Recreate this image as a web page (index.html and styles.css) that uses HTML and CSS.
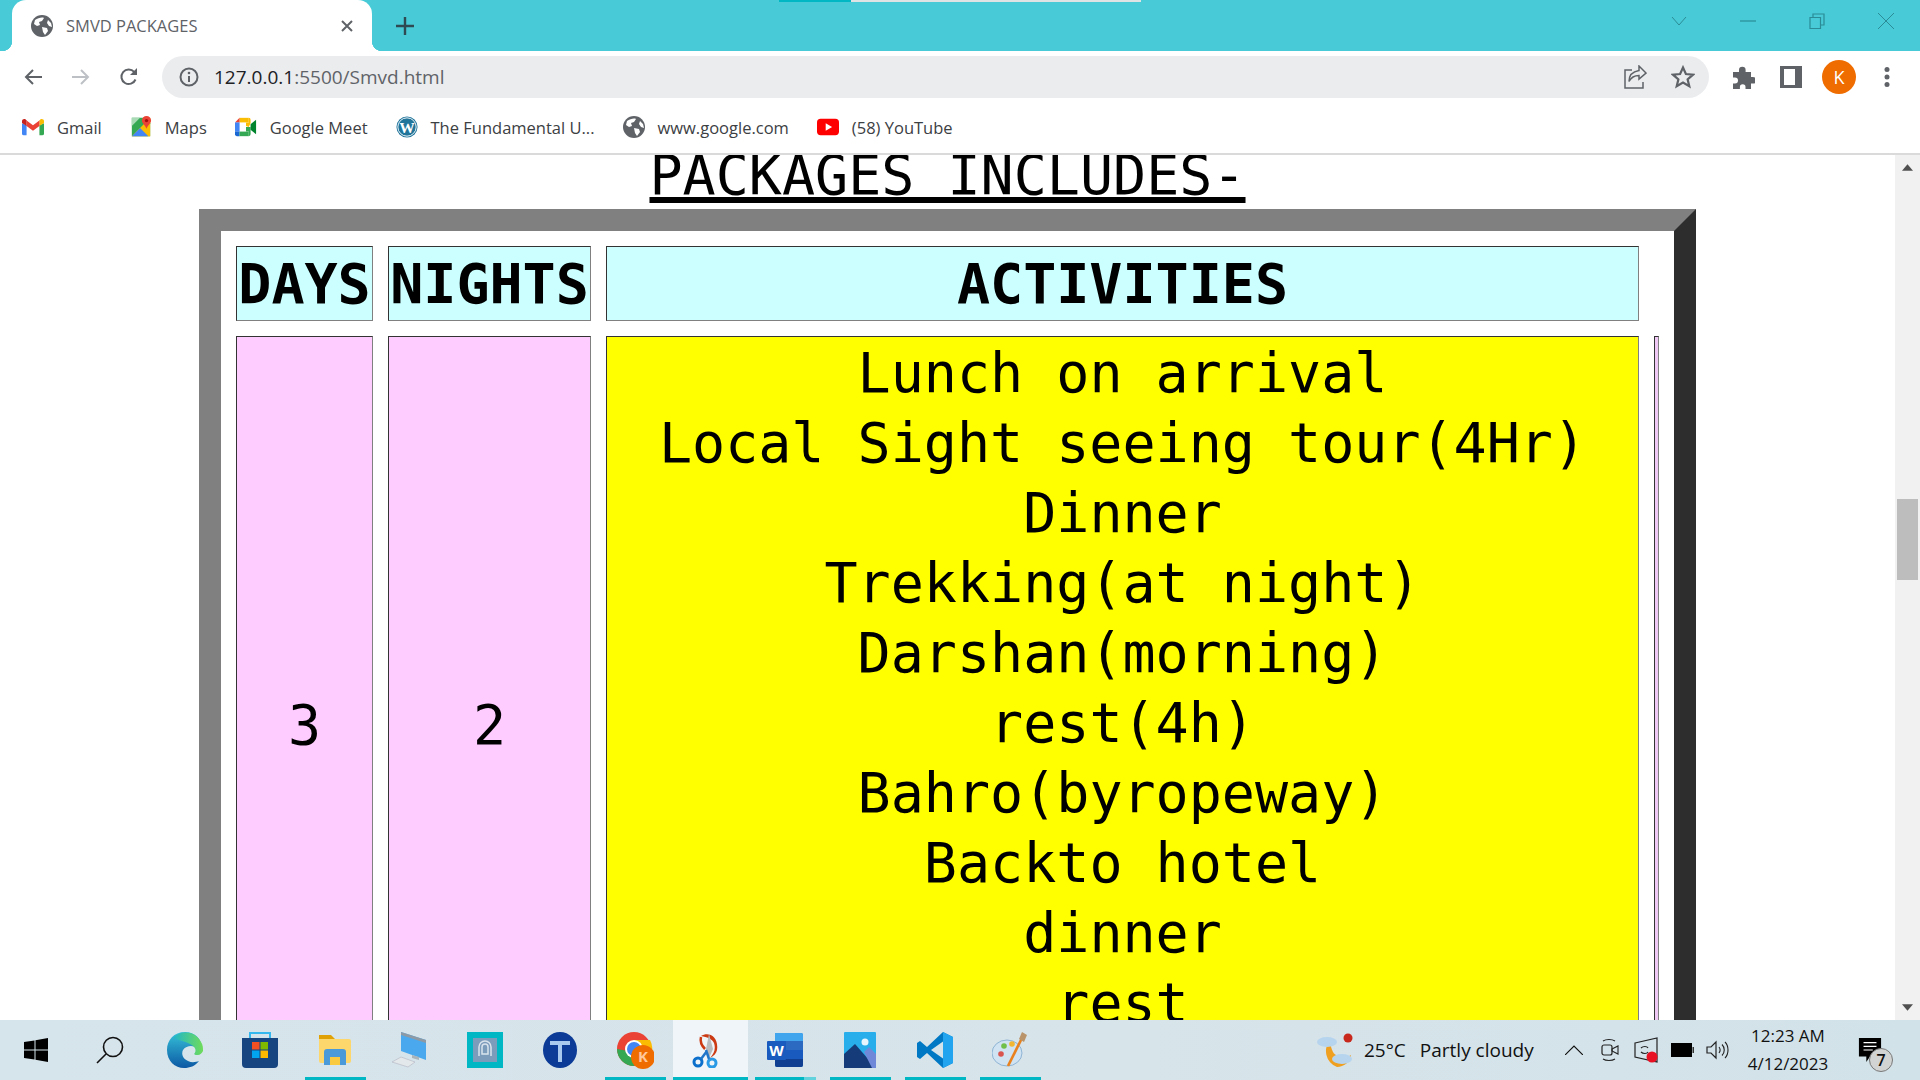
FILE: index.html
```html
<!DOCTYPE html>
<html lang="en">
<head>
<meta charset="utf-8">
<title>SMVD PACKAGES</title>
<link rel="stylesheet" href="styles.css">
</head>
<body>
<div class="window">
  <header class="titlebar">
    <div class="loadstrip"><span class="load-a"></span><span class="load-b"></span></div>
    <div class="tab">
      <svg class="favicon" viewBox="0 0 22 22"><use href="#globe"/></svg>
      <span class="tab-title">SMVD PACKAGES</span>
      <svg class="tab-close" viewBox="0 0 12 12"><path d="M1 1l10 10M11 1L1 11" stroke="#5f6368" stroke-width="2"/></svg>
    </div>
    <svg class="newtab" viewBox="0 0 18 18"><path d="M9 0v18M0 9h18" stroke="#2f4a52" stroke-width="2.4"/></svg>
    <div class="winctrls">
      <div class="winctrl"><svg viewBox="0 0 16 10" class="wc-svg"><path d="M1 1l7 8 7-8" fill="none" stroke="#2b8c97" stroke-width="1"/></svg></div>
      <div class="winctrl"><svg viewBox="0 0 16 16" class="wc-svg"><path d="M0 8h16" stroke="#2b8c97" stroke-width="1.2"/></svg></div>
      <div class="winctrl"><svg viewBox="0 0 16 16" class="wc-svg"><path d="M1 4.500h10.500v11H1zM4 4.500V1h11v11h-3.500" fill="none" stroke="#2b8c97" stroke-width="1.2"/></svg></div>
      <div class="winctrl"><svg viewBox="0 0 16 16" class="wc-svg"><path d="M0 0l16 16M16 0L0 16" stroke="#2b8c97" stroke-width="1"/></svg></div>
    </div>
  </header>

  <div class="toolbar">
    <div class="tbtn"><svg class="i20" viewBox="0 0 20 20"><path d="M19 10H3M10 3l-7 7 7 7" fill="none" stroke="#5f6368" stroke-width="2"/></svg></div>
    <div class="tbtn"><svg class="i20" viewBox="0 0 20 20"><path d="M1 10h16M10 3l7 7-7 7" fill="none" stroke="#bdc1c6" stroke-width="2"/></svg></div>
    <div class="tbtn"><svg class="i20" viewBox="0 0 20 20"><path d="M16.500 12.500a7.300 7.300 0 1 1-1.300-7.600" fill="none" stroke="#5f6368" stroke-width="2"/><path d="M18 1v7h-7z" fill="#5f6368"/></svg></div>
    <div class="omnibox">
      <svg class="i20 info" viewBox="0 0 20 20"><circle cx="10" cy="10" r="8.500" fill="none" stroke="#5f6368" stroke-width="2"/><path d="M10 9v6" stroke="#5f6368" stroke-width="2"/><circle cx="10" cy="6" r="1.300" fill="#5f6368"/></svg>
      <span class="url"><span class="url-host">127.0.0.1</span>:5500/Smvd.html</span>
      <div class="tbtn omni-btn"><svg class="i24" viewBox="0 0 24 24"><path d="M9 5H2v18h18v-6" fill="none" stroke="#5f6368" stroke-width="1.500"/><path d="M16 1l7 7-7 6v-3.500c-5 0-8 2-10 6 0-6 4-10 10-11z" fill="none" stroke="#5f6368" stroke-width="1.500"/></svg></div>
      <div class="tbtn omni-btn"><svg class="i24" viewBox="0 0 24 24"><path d="M12 2.500l2.900 6.500 7.100.7-5.400 4.600 1.700 7-6.300-3.700-6.300 3.700 1.700-7L2 9.700l7.100-.7z" fill="none" stroke="#5f6368" stroke-width="2.200"/></svg></div>
    </div>
    <div class="tbtn"><svg class="i24" viewBox="0 0 24 24"><path d="M2 7h6V5a3.300 3.300 0 0 1 6.600 0v2H20v5h2a3.300 3.300 0 0 1 0 6.600h-2V24h-5.500v-2a2.800 2.800 0 0 0-5.600 0v2H2v-5.500h2a3 3 0 0 0 0-6H2z" fill="#5f6368"/></svg></div>
    <div class="tbtn"><svg class="i22" viewBox="0 0 22 22"><path d="M0 0h22v22H0zM4 3v16h11V3z" fill="#5f6368" fill-rule="evenodd"/></svg></div>
    <div class="tbtn"><div class="avatar">K</div></div>
    <div class="tbtn"><svg class="i24" viewBox="0 0 24 24"><circle cx="12" cy="4.500" r="2.500" fill="#5f6368"/><circle cx="12" cy="12" r="2.500" fill="#5f6368"/><circle cx="12" cy="19.500" r="2.500" fill="#5f6368"/></svg></div>
  </div>

  <nav class="bookmarks">
    <div class="bm bm-gmail">
      <svg class="bm-icon" viewBox="0 0 24 18"><path d="M0 5v11a2 2 0 0 0 2 2h3V7z" fill="#4285f4"/><path d="M24 5v11a2 2 0 0 1-2 2h-3V7z" fill="#34a853"/><path d="M19 2v6l5-3.500V2.500C24 .5 21.500-.5 20 .7z" fill="#fbbc04"/><path d="M5 8V1.800L12 7l7-5.200V8l-7 5.200z" fill="#ea4335"/><path d="M0 2.500v2L5 8V1.800L4 .7C2.500-.5 0 .5 0 2.500z" fill="#c5221f"/></svg>
      <span>Gmail</span>
    </div>
    <div class="bm bm-maps">
      <svg class="bm-icon" viewBox="0 0 24 24"><path d="M2 2h14l6 6v14H2z" fill="#34a853"/><path d="M2 22L22 2v20z" fill="#fbbc04"/><path d="M2 22l9-9 9 9z" fill="#4285f4"/><path d="M2 2h9L2 11z" fill="#a8dab5"/><path d="M18 0a5 5 0 0 1 5 5c0 3-3.500 5-5 9-1.500-4-5-6-5-9a5 5 0 0 1 5-5z" fill="#ea4335"/><circle cx="18" cy="5" r="1.800" fill="#a50e0e"/></svg>
      <span>Maps</span>
    </div>
    <div class="bm bm-meet">
      <svg class="bm-icon" viewBox="0 0 24 20"><path d="M5 0h10v5H5z" fill="#fbbc04"/><path d="M0 5l5-5v5z" fill="#ea4335"/><path d="M0 5h5v10H0z" fill="#4285f4"/><path d="M0 15h5v5H2a2 2 0 0 1-2-2z" fill="#1967d2"/><path d="M5 15h10v5H5z" fill="#34a853"/><path d="M15 0a2 2 0 0 1 2 2v4l-2 4-3-1V5h3z" fill="#fbbc04"/><path d="M12 10h5v8a2 2 0 0 1-2 2v-5h-3z" fill="#34a853"/><path d="M17 7l6-5v16l-6-5z" fill="#00832d"/></svg>
      <span>Google Meet</span>
    </div>
    <div class="bm bm-wp">
      <svg class="bm-icon" viewBox="0 0 24 24"><circle cx="12" cy="12" r="11.500" fill="#21759b"/><circle cx="12" cy="12" r="10" fill="none" stroke="#fff" stroke-width="1"/><text x="12" y="18" class="wp-w">W</text></svg>
      <span>The Fundamental U...</span>
    </div>
    <div class="bm bm-google">
      <svg class="bm-icon" viewBox="0 0 22 22"><use href="#globe"/></svg>
      <span>www.google.com</span>
    </div>
    <div class="bm bm-yt">
      <svg class="bm-icon" viewBox="0 0 24 18"><rect width="24" height="18" rx="4" fill="#f00"/><path d="M9.500 5v8l7-4z" fill="#fff"/></svg>
      <span>(58) YouTube</span>
    </div>
  </nav>

  <div class="viewport">
    <main class="page">
      <h2 class="pk-head">PACKAGES INCLUDES-</h2>
      <table class="pk-table">
        <colgroup><col class="col-days"><col class="col-nights"><col class="col-act"><col class="col-thin"></colgroup>
        <tr class="row-head">
          <th>DAYS</th>
          <th>NIGHTS</th>
          <th>ACTIVITIES</th>
        </tr>
        <tr class="row-body">
          <td class="pink">3</td>
          <td class="pink">2</td>
          <td class="act">Lunch on arrival<br>Local Sight seeing tour(4Hr)<br>Dinner<br>Trekking(at night)<br>Darshan(morning)<br>rest(4h)<br>Bahro(byropeway)<br>Backto hotel<br>dinner<br>rest</td>
          <td class="thin"></td>
        </tr>
      </table>
    </main>
    <div class="scrollbar">
      <div class="sb-arrow"><svg class="sb-svg" viewBox="0 0 12 7"><path d="M6 0l6 7H0z" fill="#505050"/></svg></div>
      <div class="sb-track"><div class="sb-thumb"></div></div>
      <div class="sb-arrow"><svg class="sb-svg" viewBox="0 0 12 7"><path d="M6 7l6-7H0z" fill="#505050"/></svg></div>
    </div>
  </div>

  <footer class="taskbar">
    <div class="tile tile-start"><svg class="i24b" viewBox="0 0 24 24"><path d="M0 4l10.500-1.600v9H0zM11.500 2.200L24 0v11.400H11.500zM0 12.500h10.500v9.100L0 20zM11.500 12.500H24V24l-12.500-2.200z" fill="#000"/></svg></div>
    <div class="tile"><svg class="i28" viewBox="0 0 28 28"><circle cx="17" cy="11" r="9.500" fill="none" stroke="#111" stroke-width="1.600"/><path d="M10 18L1 27" stroke="#111" stroke-width="1.600"/></svg></div>
    <div class="tile"><svg class="i36" viewBox="0 0 36 36"><defs><linearGradient id="eb" x1="0" y1="0" x2="0" y2="1"><stop offset="0" stop-color="#35c1d9"/><stop offset="1" stop-color="#0c59a4"/></linearGradient><linearGradient id="eg" x1="0" y1="0" x2="1" y2="0"><stop offset="0" stop-color="#1fb5c9"/><stop offset="1" stop-color="#6fdc5a"/></linearGradient></defs><path d="M18 0C7 0 0 8 0 18c0 11 8 18 17 18 6 0 11-2 15-7-3 1-7 2-11 0-5-2-7-7-5-11 2-3 5-4 8-4 5 0 8 3 11 5V17C35 7 28 0 18 0z" fill="url(#eb)"/><path d="M6 6c7-8 22-8 28 4 2 3 2 6 2 9-1 2-3 4-5 4s-3 0-4-1c2-2 2-5 0-7-4-5-14-6-21-9z" fill="url(#eg)"/></svg></div>
    <div class="tile"><svg class="i36" viewBox="0 0 36 36"><path d="M8 6V1h20v5" fill="none" stroke="#35b8ee" stroke-width="2"/><path d="M0 6h36v26a4 4 0 0 1-4 4H4a4 4 0 0 1-4-4z" fill="#16457f"/><path d="M10 10h7.500v7.500H10z" fill="#f25022"/><path d="M18.500 10H26v7.500h-7.500z" fill="#7fba00"/><path d="M10 18.500h7.500V26H10z" fill="#00a4ef"/><path d="M18.500 18.500H26V26h-7.500z" fill="#ffb900"/></svg></div>
    <div class="tile tile-open"><svg class="i36" viewBox="0 0 36 36"><path d="M2 3h12l4 4H2z" fill="#e0a106"/><path d="M2 7h30a2 2 0 0 1 2 2v20a2 2 0 0 1-2 2H4a2 2 0 0 1-2-2z" fill="#fdd76c"/><path d="M7 33V20a3 3 0 0 1 3-3h16a3 3 0 0 1 3 3v13h-6v-8H13v8z" fill="#4a9ada"/><path d="M13 25h10v8H13z" fill="#f9c93f"/></svg></div>
    <div class="tile"><svg class="i36" viewBox="0 0 36 36"><path d="M9 0l25 8v20L9 19z" fill="#4aa9ee"/><path d="M9 0l25 8v3L9 3z" fill="#8d9aa5"/><path d="M20 23l7 2v3l-7-2z" fill="#a9b4bb"/><path d="M0 30l9-5 14 5-7 5z" fill="#e3e8ea" stroke="#aab" stroke-width=".5"/></svg></div>
    <div class="tile"><svg class="i36" viewBox="0 0 36 36"><rect width="36" height="36" fill="#00b7c3"/><rect x="6" y="6" width="24" height="24" fill="#7c9cbc"/><path d="M12 24v-9a6 6 0 0 1 12 0v9" fill="none" stroke="#d8e3ec" stroke-width="1.500"/><path d="M15 22v-7a3 3 0 0 1 6 0v7z" fill="none" stroke="#d8e3ec" stroke-width="1.500"/></svg></div>
    <div class="tile"><svg class="i36" viewBox="0 0 36 36"><ellipse cx="18" cy="18" rx="17" ry="18" fill="#0b3b96"/><path d="M8 9h20v4h-8v17h-4V13H8z" fill="#a9c8ee"/></svg></div>
    <div class="tile tile-open"><svg class="i38" viewBox="0 0 38 38"><circle cx="18" cy="18" r="17" fill="#ea4335"/><path d="M1 18a17 17 0 0 0 17 17l8-14H18z" fill="#34a853"/><path d="M18 9h16a17 17 0 0 1-8 24z" fill="#fbbc04"/><circle cx="18" cy="18" r="9" fill="#fff"/><circle cx="18" cy="18" r="7" fill="#4285f4"/><circle cx="27" cy="26" r="12" fill="#ef6c00"/><text x="27" y="31" class="badge-k">K</text></svg></div>
    <div class="tile tile-open tile-current"><svg class="i36" viewBox="0 0 36 36"><path d="M9 4c8-5 18 1 16 14-.6 3-3 6-7 8 4-4 6-9 4-15-2-4-7-6-13-7z" fill="#cc3a14"/><path d="M9 5c-1 4 0 8 4 12" fill="none" stroke="#cc3a14" stroke-width="2.500"/><path d="M17 2l4 15-4 9-3-9z" fill="#b9bcbe"/><circle cx="6" cy="30" r="4" fill="none" stroke="#0b6fcb" stroke-width="3"/><circle cx="20" cy="31" r="4" fill="none" stroke="#2a9ae6" stroke-width="3"/><path d="M9 27l6-8M17 27l-3-9" stroke="#2276c9" stroke-width="2.500"/></svg></div>
    <div class="tile tile-open tile-partial"><svg class="i36" viewBox="0 0 36 36"><rect x="8" y="1" width="28" height="34" rx="2" fill="#2b7cd3"/><path d="M8 9h28v9H8z" fill="#2b6ac0"/><path d="M8 18h28v9H8z" fill="#185abd"/><path d="M8 27h28v6a2 2 0 0 1-2 2H10a2 2 0 0 1-2-2z" fill="#103f91"/><path d="M8 1h26a2 2 0 0 1 2 2v6H8z" fill="#41a5ee"/><rect y="9" width="19" height="19" rx="1" fill="#185abd"/><text x="9.500" y="24" class="word-w">W</text></svg></div>
    <div class="tile tile-open"><svg class="i36" viewBox="0 0 32 36"><rect width="32" height="36" rx="1" fill="#28aeea"/><circle cx="21" cy="10" r="3.500" fill="#e8f5fc"/><path d="M0 36V22l11-10 21 24z" fill="#153c78"/><path d="M20 20l5-5 7 7v14h-4z" fill="#6f89d8"/></svg></div>
    <div class="tile tile-open"><svg class="i36" viewBox="0 0 36 36"><path d="M26 0l10 5v26l-10 5L10 21 3 27l-3-2v-14l3-2 7 6z" fill="#0078c4"/><path d="M26 0l10 5v26l-10 5z" fill="#23a4ee"/><path d="M26 9.500L14 18l12 8.500z" fill="#d5e3ea"/></svg></div>
    <div class="tile tile-open"><svg class="i36" viewBox="0 0 36 36"><ellipse cx="15" cy="21" rx="15" ry="13" fill="#cfe3f2" stroke="#8fb4d4"/><circle cx="9" cy="22" r="2.800" fill="#d9534f"/><circle cx="12" cy="14" r="2.800" fill="#6fbf4a"/><circle cx="20" cy="12" r="2.800" fill="#f2b632"/><path d="M30 6L16 34" stroke="#e9821e" stroke-width="2.600"/><path d="M27 7l3-7 5 3-3 7z" fill="#b9946a"/></svg></div>
    <div class="tray">
      <div class="weather">
        <svg class="i36w" viewBox="0 0 36 34"><path d="M14 6a17 17 0 0 0 6 28c7 0 13-5 14-12-6 4-15 2-18-3-2-4-3-9-2-13z" fill="#f0a020"/><circle cx="31" cy="5" r="4.500" fill="#c8281c"/><ellipse cx="10" cy="9" rx="10" ry="5" fill="#b6d4ee"/><ellipse cx="25" cy="26" rx="10" ry="5" fill="#b6d4ee"/></svg>
        <span class="temp">25°C</span>
        <span class="cond">Partly cloudy</span>
      </div>
      <div class="tray-ic"><svg class="i18" viewBox="0 0 18 10"><path d="M0 10l9-9 9 9" fill="none" stroke="#111" stroke-width="1.200"/></svg></div>
      <div class="tray-ic"><svg class="i18t" viewBox="0 0 18 24"><rect x="1" y="7" width="10" height="10" rx="2" fill="none" stroke="#222" stroke-width="1.200"/><path d="M11 11l6-3v8l-6-3zM2 3c3-2 9-2 12 0M2 21c3 2 9 2 12 0" fill="none" stroke="#222" stroke-width="1.100"/></svg></div>
      <div class="tray-ic"><svg class="i24t" viewBox="0 0 24 26"><path d="M1 6l22-5v24L1 20z" fill="none" stroke="#222" stroke-width="1.200"/><path d="M7 11c2-2 6-2 7 0M7 15c2 2 6 2 7 0" fill="none" stroke="#222" stroke-width="1.200"/><circle cx="18" cy="20" r="5.500" fill="#e81123"/></svg></div>
      <div class="tray-ic"><svg class="i22b" viewBox="0 0 23 14"><path d="M0 0h21v14H0z" fill="#000"/><path d="M21.500 4H23v6h-1.500z" fill="#333"/></svg></div>
      <div class="tray-ic"><svg class="i24" viewBox="0 0 24 20"><path d="M1 7h4l5-5v16l-5-5H1z" fill="none" stroke="#222" stroke-width="1.200"/><path d="M13 7c1.500 2 1.500 4 0 6M16 4.500c3 3 3 8 0 11M19 2c4 4 4 12 0 16" fill="none" stroke="#222" stroke-width="1.100"/></svg></div>
      <div class="clock"><span>12:23 AM</span><span>4/12/2023</span></div>
      <div class="notif">
        <svg class="i24" viewBox="0 0 24 26"><path d="M0 0h24v20H12l-4 6v-6H0z" fill="#000"/><path d="M5 5h14M5 9h14M5 13h10" stroke="#fff" stroke-width="1.300"/></svg>
        <span class="notif-count">7</span>
      </div>
    </div>
  </footer>
</div>
<svg class="defs" aria-hidden="true"><symbol id="globe" viewBox="0 0 22 22"><circle cx="11" cy="11" r="11" fill="#5f6368"/><path d="M4 5c3-2 7-3 9-2l-2 3-3 1 1 3-3 1-3-2zM11 12l5 1 1 3-3 4-2-3zM17 5l3 3 1 4-3-1-2-3z" fill="#fff"/></symbol></svg>
</body>
</html>
```

FILE: styles.css
```css
* { box-sizing: border-box; }
html, body { margin: 0; height: 100%; overflow: hidden; }
body { font-family: "Open Sans", "Noto Sans", sans-serif; background: #fff; }
svg { display: block; flex: none; }
.defs { width: 0; height: 0; position: absolute; }

.window { display: flex; flex-direction: column; height: 100vh; }

/* title bar */
.titlebar { position: relative; height: 51px; flex: none; background: #48cbd6; display: flex; align-items: center; padding-left: 12px; }
.loadstrip { position: absolute; top: 0; left: 779px; display: flex; height: 2px; }
.load-a { width: 72px; background: #00b7c3; }
.load-b { width: 290px; background: #dfe3e3; }
.tab { position: relative; width: 360px; height: 51px; background: #fff; border-radius: 14px 14px 0 0; display: flex; align-items: center; padding-left: 19px; color: #5f6368; }
.tab::before, .tab::after { content: ""; position: absolute; bottom: 0; width: 10px; height: 10px; }
.tab::before { left: -10px; background: radial-gradient(circle at 0 0, transparent 10px, #fff 10.500px); }
.tab::after { right: -10px; background: radial-gradient(circle at 100% 0, transparent 10px, #fff 10.500px); }
.favicon { width: 22px; height: 22px; }
.tab-title { margin-left: 13px; font-size: 16.500px; flex: 1; }
.tab-close { width: 12px; height: 12px; margin-right: 19px; }
.newtab { width: 18px; height: 18px; margin-left: 24px; }
.winctrls { display: flex; margin-left: auto; }
.winctrl { width: 69px; height: 51px; display: flex; align-items: center; justify-content: center; padding-bottom: 9px; }
.wc-svg { width: 16px; height: 16px; }

/* toolbar */
.toolbar { height: 52px; flex: none; display: flex; align-items: center; padding: 0 9px; background: #fff; }
.tbtn { width: 48px; height: 42px; flex: none; display: flex; align-items: center; justify-content: center; }
.i20 { width: 20px; height: 20px; }
.i22 { width: 22px; height: 22px; }
.i24 { width: 24px; height: 24px; }
.omnibox { flex: 1; height: 42px; margin: 0 10px 0 9px; background: #ebecee; border-radius: 21px; display: flex; align-items: center; padding: 0 2px 0 17px; }
.url { margin-left: 15px; flex: 1; font-size: 19px; color: #5f6368; }
.url-host { color: #202124; }
.avatar { width: 34px; height: 34px; border-radius: 50%; background: #ef6c00; color: #fff; font-size: 18px; display: flex; align-items: center; justify-content: center; }

/* bookmarks */
.bookmarks { height: 52px; flex: none; display: flex; align-items: center; padding: 0 0 2px 22px; border-bottom: 2px solid #dadada; font-size: 16.500px; color: #3c4043; }
.bm { display: flex; align-items: center; }
.bm-icon { width: 22px; height: 22px; margin-right: 13px; }
.bm-maps, .bm-meet, .bm-wp, .bm-google, .bm-yt { margin-left: 28px; }
.wp-w { font-family: "Liberation Serif", serif; font-size: 17px; font-weight: 700; fill: #fff; text-anchor: middle; }

/* page */
.viewport { flex: 1; min-height: 0; display: flex; overflow: hidden; background: #fff; }
.page { flex: 1; min-width: 0; color: #000; font-family: "DejaVu Sans Mono", monospace; font-size: 55px; }
.pk-head { margin: -7px 0 7px; font-size: 55px; font-weight: 400; line-height: 54px; text-align: center; text-decoration: underline; text-decoration-thickness: 6px; text-underline-offset: 3px; }
.pk-table { margin: 0 auto; width: 1497px; table-layout: fixed; border-collapse: separate; border-spacing: 15px; border: 22px solid; border-color: #808080 #2d2d2d #2d2d2d #808080; }
.col-days { width: 137px; }
.col-nights { width: 203px; }
.col-act { width: 1033px; }
.col-thin { width: 5px; }
.pk-table th, .pk-table td { border: 1px solid; border-color: #333 #808080 #808080 #333; padding: 1px; text-align: center; }
.pk-table th { height: 75px; background: #ccffff; font-weight: 700; }
.row-body td { height: 778px; }
.pink { background: #ffccff; }
.act { background: #ff0; vertical-align: top; line-height: 70px; padding-top: 2px; }
.pk-table td.thin { background: #f0c8f5; padding: 0; }

/* scrollbar */
.scrollbar { width: 25px; flex: none; background: #f1f1f1; display: flex; flex-direction: column; }
.sb-arrow { height: 25px; flex: none; display: flex; align-items: center; justify-content: center; }
.sb-svg { width: 11px; height: 7px; }
.sb-track { flex: 1; padding-top: 319px; }
.sb-thumb { width: 21px; height: 81px; margin-left: 2px; background: #bdbdbd; }

/* taskbar */
.taskbar { height: 60px; flex: none; display: flex; align-items: stretch; background: linear-gradient(90deg, #d6e4eb, #d7e4ea 60%, #d2e2e9); color: #111; }
.tile { position: relative; width: 75px; flex: none; display: flex; align-items: center; justify-content: center; }
.tile-start { width: 72.500px; }
.tile-open::after { content: ""; position: absolute; left: 7px; right: 7px; bottom: 0; height: 3px; background: #00b7c3; }
.tile-partial::before { content: ""; position: absolute; right: 7px; bottom: 0; width: 12px; height: 3px; background: #62d3dc; z-index: 1; }
.tile-current { background: #eff5f8; }
.tile-current::after { left: 0; right: 0; }
.i24b { width: 24px; height: 24px; }
.i28 { width: 28px; height: 28px; }
.i36 { width: 36px; height: 36px; }
.i38 { width: 38px; height: 38px; }
.badge-k { font-size: 15px; font-weight: 700; fill: #ffc79a; text-anchor: middle; }
.word-w { font-size: 15px; font-weight: 700; fill: #fff; text-anchor: middle; }
.tray { margin-left: auto; display: flex; align-items: center; font-size: 19px; padding-right: 20px; }
.weather { display: flex; align-items: center; width: 239px; }
.i36w { width: 36px; height: 34px; margin-right: 11px; }
.temp { margin-right: 14px; }
.tray-ic { width: 36px; display: flex; align-items: center; justify-content: center; }
.i18 { width: 18px; height: 10px; }
.i18t { width: 18px; height: 24px; }
.i24t { width: 24px; height: 26px; }
.i22b { width: 23px; height: 14px; }
.clock { width: 104px; display: flex; flex-direction: column; align-items: center; font-size: 17px; line-height: 28px; }
.notif { position: relative; width: 60px; display: flex; justify-content: center; }
.notif-count { position: absolute; left: 29px; top: 10px; width: 24px; height: 24px; border-radius: 50%; background: #d2d4d4; border: 1px solid #777; color: #111; font-size: 16px; font-weight: 600; display: flex; align-items: center; justify-content: center; }
```
